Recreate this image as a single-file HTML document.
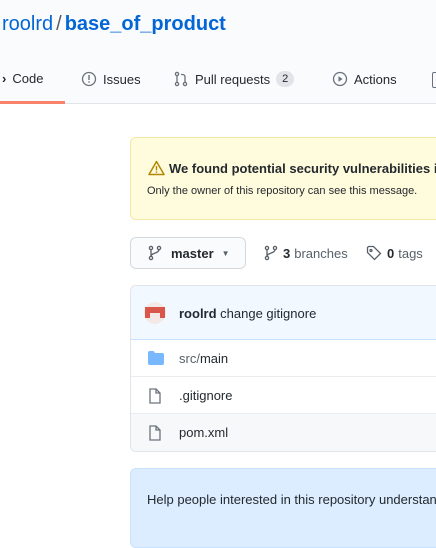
<!DOCTYPE html>
<html><head><meta charset="utf-8">
<style>
*{box-sizing:border-box;margin:0;padding:0}
body{width:436px;height:526px;overflow:hidden;background:#fff;font-family:"Liberation Sans",Arial,sans-serif;color:#24292e;position:relative}
.hdr{position:absolute;left:0;top:0;width:436px;height:104px;background:#fafbfc;border-bottom:1px solid #e1e4e8}
.title{position:absolute;left:2px;top:13px;font-size:20px;color:#0366d6;white-space:nowrap}
.title b{font-weight:bold}
.title .sl{color:#586069;margin:0 3px}
.tab{position:absolute;top:71px;font-size:13px;color:#24292e;white-space:nowrap;display:flex;align-items:center}
.tab svg{margin-right:6px}
.cnt{display:inline-block;background:#e1e4e8;border-radius:10px;padding:2px 6px;font-size:11px;margin-left:6px}
.ul{position:absolute;left:0;top:101px;width:65px;height:3px;background:#f9826c}
.alert{position:absolute;left:130px;top:137px;width:320px;height:83px;background:#fffbdd;border:1px solid #f5e7a5;border-radius:6px}
.abig{position:absolute;left:17px;top:22px;font-size:13px;font-weight:bold;white-space:nowrap;display:flex;align-items:center}
.asm{position:absolute;left:16px;top:47px;font-size:11px;white-space:nowrap}
.btn{position:absolute;left:130px;top:237px;width:116px;height:32px;background:#fafbfc;border:1px solid #d6d9dc;border-radius:6px;font-size:13px;font-weight:bold;display:flex;align-items:center;padding-left:17px}
.meta{position:absolute;top:245px;font-size:13px;color:#586069;white-space:nowrap;display:flex;align-items:center}
.meta b{color:#24292e;margin:0 4px 0 5px}
.box{position:absolute;left:130px;top:285px;width:320px;height:167px;border:1px solid #e1e4e8;border-radius:6px;overflow:hidden}
.bh{height:54px;background:#f1f8ff;border-bottom:1px solid #c8e1ff;position:relative}
.row{height:37px;border-bottom:1px solid #eaecef;position:relative;font-size:13px}
.row:last-child{border-bottom:none;background:#f6f8fa;height:38px}
.row svg{position:absolute;left:17px;top:11px}
.row span{position:absolute;left:48px;top:11px}
.readme{position:absolute;left:130px;top:468px;width:320px;height:80px;background:#dbedff;border:1px solid #c8e1ff;border-radius:6px}
.av{position:absolute;background:#d9574a}
</style></head><body>
<div class="hdr">
<div class="title">roolrd<span class="sl">/</span><b>base_of_product</b></div>
<div class="tab" style="left:2px"><span style="margin-right:6px;font-weight:bold">&#8250;</span>Code</div>
<div class="tab" style="left:81px"><svg width="16" height="16" viewBox="0 0 16 16"><circle cx="8" cy="8" r="6.5" fill="none" stroke="#6a737d" stroke-width="1.3"/><rect x="7.3" y="4" width="1.4" height="5" fill="#6a737d"/><rect x="7.3" y="10.3" width="1.4" height="1.4" fill="#6a737d"/></svg>Issues</div>
<div class="tab" style="left:173px"><svg width="16" height="16" viewBox="0 0 16 16" fill="none" stroke="#6a737d" stroke-width="1.3"><circle cx="4" cy="3" r="1.6"/><circle cx="4" cy="13" r="1.6"/><circle cx="12" cy="13" r="1.6"/><path d="M4 4.6v6.8M12 11.4V6c0-1.5-1-2.5-2.5-2.5H8"/></svg>Pull requests<span class="cnt">2</span></div>
<div class="tab" style="left:332px"><svg width="16" height="16" viewBox="0 0 16 16"><circle cx="8" cy="8" r="6.5" fill="none" stroke="#6a737d" stroke-width="1.3"/><path d="M6.5 5.3v5.4L10.6 8z" fill="#6a737d"/></svg>Actions</div>
<div style="position:absolute;left:432px;top:72px;width:6px;height:16px;border:1.3px solid #6a737d;border-radius:2px"></div>
<div class="ul"></div>
</div>
<div class="alert">
<div class="abig"><svg width="17" height="16" viewBox="0 0 17 16" style="margin-right:4px"><path d="M8.5 1.5L16 14.5H1z" fill="none" stroke="#b08800" stroke-width="1.5" stroke-linejoin="round"/><rect x="7.8" y="6" width="1.4" height="4.5" fill="#b08800"/><rect x="7.8" y="11.5" width="1.4" height="1.4" fill="#b08800"/></svg>We found potential security vulnerabilities in</div>
<div class="asm">Only the owner of this repository can see this message.</div>
</div>
<div class="btn"><svg width="14" height="16" viewBox="0 0 14 16" fill="none" stroke="#586069" stroke-width="1.3" style="margin-right:9px"><circle cx="3" cy="3" r="1.6"/><circle cx="3" cy="13" r="1.6"/><circle cx="11" cy="3" r="1.6"/><path d="M3 4.6v6.8M11 4.6c0 4-8 3-8 6.8"/></svg>master<span style="margin-left:8px;font-size:8px;color:#586069">&#9660;</span></div>
<div class="meta" style="left:264px"><svg width="14" height="16" viewBox="0 0 14 16" fill="none" stroke="#586069" stroke-width="1.3"><circle cx="3" cy="3" r="1.6"/><circle cx="3" cy="13" r="1.6"/><circle cx="11" cy="3" r="1.6"/><path d="M3 4.6v6.8M11 4.6c0 4-8 3-8 6.8"/></svg><b>3</b>branches</div>
<div class="meta" style="left:366px"><svg width="16" height="16" viewBox="0 0 16 16" fill="none" stroke="#586069" stroke-width="1.3"><path d="M1.5 2.5v5l7 7 6-6-7-7h-5z"/><circle cx="5" cy="5.5" r="1"/></svg><b>0</b>tags</div>
<div class="box">
<div class="bh">
<div style="position:absolute;left:13px;top:16px;width:22px;height:22px;border-radius:50%;background:#f3e9e7"></div>
<div class="av" style="left:14px;top:21px;width:20px;height:6px"></div>
<div class="av" style="left:14px;top:27px;width:5px;height:5px"></div>
<div class="av" style="left:29px;top:27px;width:5px;height:5px"></div>
<div style="position:absolute;left:48px;top:20px;font-size:13px;white-space:nowrap"><b>roolrd</b> change gitignore</div>
</div>
<div class="row"><svg width="16" height="14" viewBox="0 0 16 14"><path d="M0 1.5C0 .7.7 0 1.5 0h4l1.5 2h7.5c.8 0 1.5.7 1.5 1.5v9c0 .8-.7 1.5-1.5 1.5h-13C.7 14 0 13.3 0 12.5z" fill="#79b8ff"/></svg><span style="color:#586069">src/<span style="position:static;color:#24292e">main</span></span></div>
<div class="row"><svg width="14" height="16" viewBox="0 0 14 16" fill="none" stroke="#6a737d" stroke-width="1.3"><path d="M2 1h6l4 4v10H2z"/><path d="M8 1v4h4"/></svg><span>.gitignore</span></div>
<div class="row"><svg width="14" height="16" viewBox="0 0 14 16" fill="none" stroke="#6a737d" stroke-width="1.3"><path d="M2 1h6l4 4v10H2z"/><path d="M8 1v4h4"/></svg><span>pom.xml</span></div>
</div>
<div class="readme"><div style="position:absolute;left:16px;top:23px;font-size:13px;white-space:nowrap">Help people interested in this repository understand</div></div>
</body></html>
